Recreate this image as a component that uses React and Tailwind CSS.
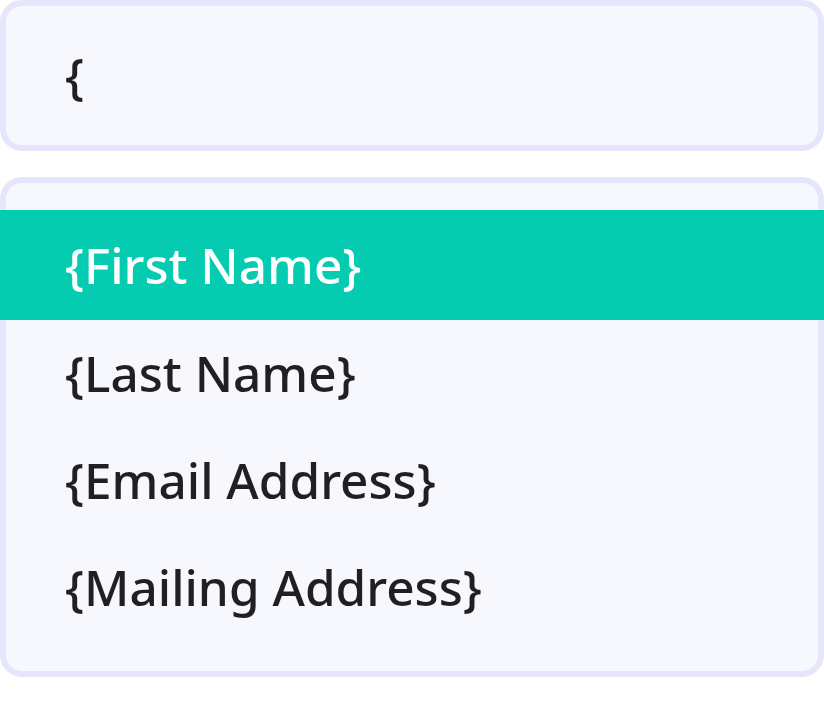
export default function App() {
  const items = ["{First Name}", "{Last Name}", "{Email Address}", "{Mailing Address}"];
  return (
    <div className="w-[824px] h-[705px] bg-white" style={{ fontFamily: '"Noto Sans", "Open Sans", sans-serif' }}>
      <div className="h-[151px] rounded-[22px] border-[6px] border-[#e5e5fb] bg-[#f7f8fe] flex items-center pl-[59px]">
        <span className="text-[49.5px] font-medium text-[#231f20] leading-none">{"{"}</span>
      </div>
      <div className="mt-[26px] h-[500px] rounded-[22px] border-[6px] border-[#e5e5fb] bg-[#f7f8fe] pt-[27px]">
        {items.map((t, i) => (
          <div
            key={t}
            className={
              i === 0
                ? "-mx-[6px] h-[110px] bg-[#05cbb0] text-white flex items-center pl-[65px] text-[49.5px] font-medium"
                : "h-[107px] text-[#231f20] flex items-center pl-[59px] text-[49.5px] font-medium"
            }
          >
            {t}
          </div>
        ))}
      </div>
    </div>
  );
}
